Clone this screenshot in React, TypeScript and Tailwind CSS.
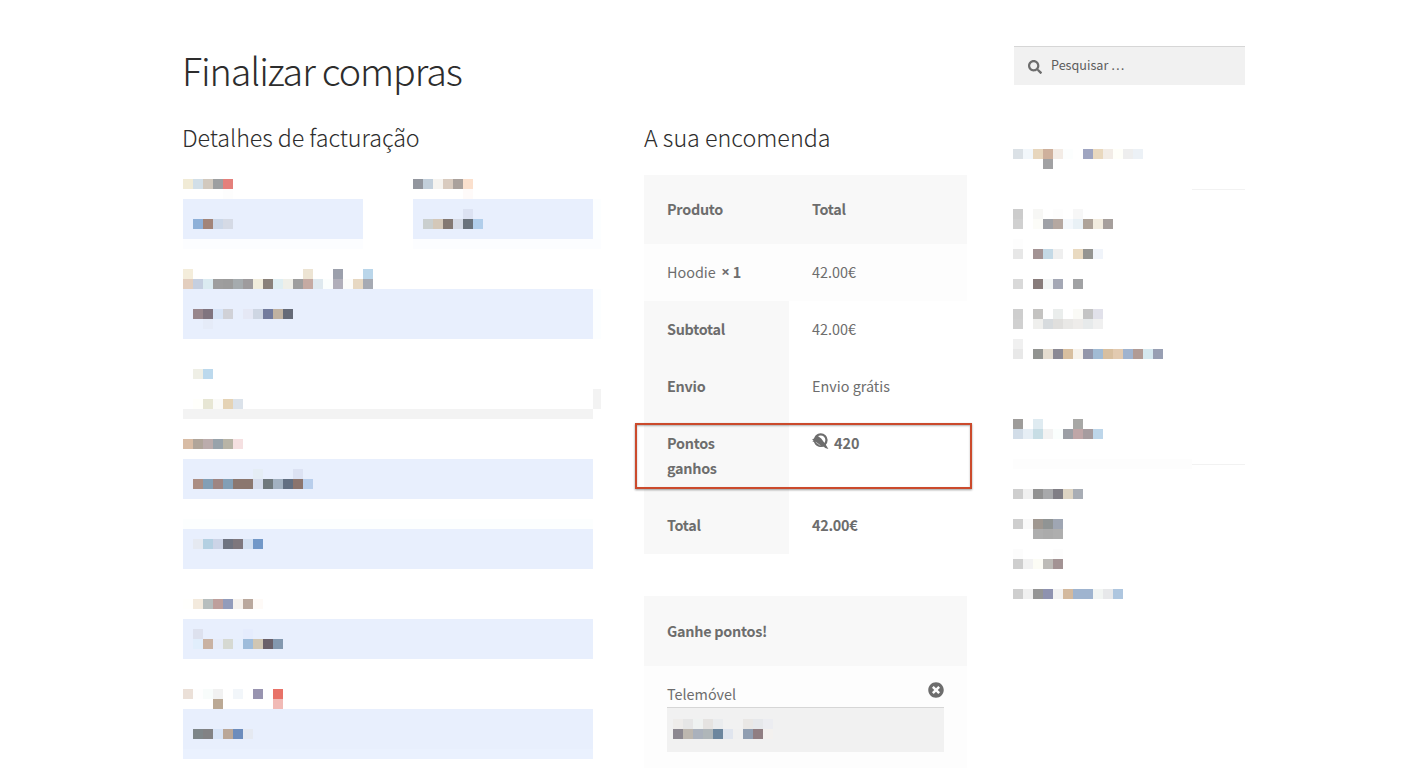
import React from "react";
import { FaSearch, FaTimesCircle } from "react-icons/fa";

/* Each row is a list of 10px cells; "." leaves a cell empty, "*n" repeats it. */
function Mosaic({ rows }: { rows: string[] }) {
  return (
    <div className="flex flex-col" aria-hidden="true">
      {rows.map((row, r) => (
        <div key={r} className="flex h-2.5">
          {row
            .split(" ")
            .filter(Boolean)
            .flatMap((token) => {
              const [cell, count] = token.split("*");
              return Array<string>(Number(count ?? 1)).fill(cell);
            })
            .map((cell, c) => (
              <span
                key={c}
                className="h-2.5 w-2.5 shrink-0"
                style={cell === "." ? undefined : { backgroundColor: `#${cell}` }}
              />
            ))}
        </div>
      ))}
    </div>
  );
}

function Field({ rows, className }: { rows: string[]; className: string }) {
  return (
    <div className={`bg-[#e8effd] pl-2.5 ${className}`}>
      <Mosaic rows={rows} />
    </div>
  );
}

function BillingForm() {
  return (
    <div className="mt-[23px] flex w-[418px] flex-col">
      <div className="flex gap-[50px]">
        <div className="w-[180px]">
          <Mosaic rows={["f1ebd6 d2dfe8 d2c9be 9d9fa1 e4807b", ".*4 fdfdfd"]} />
          <Field className="h-10 pt-5" rows={["8eb0d8 a28478 cbd7e8 d5dae5"]} />
          <div className="h-2.5 bg-[#fcfdff]" />
        </div>
        <div className="w-[188px]">
          <Mosaic rows={["92969e c2cfdb f5f3ef d9cbbf aaa19c fbe0cd", ".*5 fefaf9"]} />
          <div className="flex">
            <Field className="h-10 w-[180px] pt-2.5" rows={[".*4 dce2f2", "cacfcf d4c8b9 837872 d5dae5 6a727b b1ceeb"]} />
            <div className="w-2 bg-[#fcfeff]" />
          </div>
          <div className="h-2.5 bg-[#fcfdff]" />
        </div>
      </div>

      <div className="mt-5">
        <Mosaic
          rows={[
            "f4eddb .*11 ede4d3 .*2 9ca0ac .*2 bad6ea",
            "e3cebe c5cfe0 dbebf1 9e9e9e 9c9c9c a5abae 9e9b9d f1eddc 8a817a dfeef2 efefe8 9e9e9e c5aaa2 dfe9ef fbfefd b1afba fcfcfa e7d8c2 a6aab3",
          ]}
        />
        <div className="flex">
          <Field
            className="h-[50px] w-[410px] pt-5"
            rows={["98868c 80747f d7e4f7 d0d1d7 . e5e8f5 ced6e3 727b9d c0b2a1 656a77", ". e5ebf8"]}
          />
          <div className="w-2 bg-[#fcfeff]" />
        </div>
      </div>

      <div className="mt-[30px] pl-2.5">
        <Mosaic rows={["efefe6 bcd9ed"]} />
      </div>
      <div className="mt-2.5 flex h-[30px] items-end">
        <div className="w-[410px]">
          <div className="pl-2.5">
            <Mosaic rows={["fffffb e7e6d4 fafaf8 e5d3b5 dbe2ea"]} />
          </div>
          <div className="h-2.5 bg-[#f3f3f3]" />
        </div>
        <div className="mb-2.5 h-5 w-2 bg-[#f3f3f3]" />
      </div>

      <div className="mt-5 w-[410px]">
        <Mosaic rows={["d8bca5 b0a59a bbacac 98a3ab b8b4a6 f5e0e1"]} />
        <Field
          className="mt-2.5 h-10 pt-2.5"
          rows={[".*6 e5edf5 .*3 dce2f3", "ab8e84 829fb6 9e8582 829fb6 8b776f*2 d6dded 70797d a2b1c1 626f82 8b746d b8ceec"]}
        />
        <div className="mt-5 h-2.5 bg-[#fcfefe]" />
        <Field className="h-10 pt-2.5" rows={["e5e9f1 b4d0e2 ccd4e7 6e7380 7e777d d3e0f1 7298c8"]} />
      </div>

      <div className="mt-[30px] w-[410px]">
        <Mosaic rows={["fffffd f3eadd b7bebe be9f9c 929cbb f6f2ed baa89d fefaf7"]} />
        <Field
          className="mt-2.5 h-10 pt-2.5"
          rows={["dde1ee .*4 e5ecfd", "e1eefc c9b2a2 e6ecf9 d6d9d2 e6effd 9ebcdb d0c6b3 6a6069 8398af"]}
        />
      </div>

      <div className="mt-[30px] w-[410px]">
        <Mosaic rows={["ebe0d8 fefefe f8fcfb f1f1f1 . f2f6fa . 9894b0 . e87268", ".*3 bba995 .*5 f1bab6"]} />
        <Field className="h-10 pt-5" rows={["7e8689 828284 d7e4f7 baa798 6c8cbc e5e9f1"]} />
        <div className="h-2.5 bg-[#eaf1fe]" />
      </div>
    </div>
  );
}

function OrderRow({ label, children, className }: { label: string; children: React.ReactNode; className: string }) {
  return (
    <div className={`flex ${className}`}>
      <div className="w-[145px] bg-[#f8f8f8] pt-[15px] pl-[23px] font-bold tracking-[-0.27px]">
        <div className="w-[70px]">{label}</div>
      </div>
      <div className="pt-[15px] pl-[23px]">{children}</div>
    </div>
  );
}

function PointsIcon() {
  return (
    <svg viewBox="0 0 17 17" className="mt-[3px] h-[17px] w-[17px]" fill="none">
      <circle cx="8.7" cy="7.1" r="5.8" stroke="#6d6d6d" strokeWidth="2.3" />
      <path d="M5.2 2.4 9.2 5.6 13.6 11.6 11.6 13.4 8 13.8 4 12 2.5 9 .3 8.6 1.7 7.6 0 6.7 2.3 5.3Z" fill="#6d6d6d" />
      <path d="M10.6 12.4 13.2 10.8 16.4 16 13.2 14.9Z" fill="#6d6d6d" />
      <path d="M3.8 9.2 8.4 12.500" stroke="#ffffff" strokeWidth="0.5" />
    </svg>
  );
}

function Order() {
  return (
    <div className="w-[323px]">
      <div className="relative mt-[19px]">
        <div className="flex h-[69px] bg-[#f8f8f8] pt-[21px] pl-[23px] font-bold tracking-[-0.27px]">
          <div className="w-[145px]">Produto</div>
          <div>Total</div>
        </div>
        <div className="flex h-[57px] bg-[#fdfdfd] pt-[15px] pl-[23px]">
          <div className="flex w-[145px]">
            <span>Hoodie</span>
            <strong className="ml-[5.5px] font-['Open_Sans',sans-serif] text-[15px] font-bold">×</strong>
            <strong className="ml-[3px] font-bold">1</strong>
          </div>
          <div>42.00€</div>
        </div>
        <OrderRow className="h-[57px]" label="Subtotal">42.00€</OrderRow>
        <OrderRow className="h-[57px]" label="Envio">Envio grátis</OrderRow>
        <OrderRow className="h-[82px]" label="Pontos ganhos">
          <div className="flex gap-[5px] font-bold">
            <PointsIcon />
            <span>420</span>
          </div>
        </OrderRow>
        <OrderRow className="h-[57px]" label="Total">
          <strong className="font-bold tracking-[-0.27px]">42.00€</strong>
        </OrderRow>
        <div className="absolute top-[248px] -left-[9px] h-[66px] w-[337px] border-2 border-[#cb4a2c] shadow-[0_1px_2px_rgba(0,0,0,0.4),inset_0_1px_2px_rgba(0,0,0,0.3)]" />
      </div>

      <div className="mt-[42px] h-[172px] bg-[#fdfdfd]">
        <div className="h-[70px] bg-[#f8f8f8] pt-[22px] pl-[23px] font-bold tracking-[-0.27px]">Ganhe pontos!</div>
        <div className="flex h-[41px] justify-between pt-[15px] pr-[23px] pl-[23px]">
          <span>Telemóvel</span>
          <FaTimesCircle className="mt-px h-4 w-4" />
        </div>
        <div className="ml-[23px] h-[45px] w-[277px] border-t border-[#d6d6d6] bg-[#f1f1f1] pt-[11px] pl-1.5">
          <Mosaic
            rows={[
              "eeecea e6e6e6 eff2f1 e5e3e1 eaecee . . e9e7e5 e6e8eb ecedf1",
              "8c8890 bdb7af aab1bc afb6b9 6c869e e0e5ee f0f0f0 909eb1 907e82 f3f1ef",
            ]}
          />
        </div>
      </div>
    </div>
  );
}

function Sidebar() {
  return (
    <aside className="flex w-[232px] flex-col pt-[46px]">
      <div className="ml-px flex h-[39px] items-start border-t border-[#d6d6d6] bg-[#f1f1f1] pl-3.5 text-[12.6px] text-[#5c5c5c]">
        <FaSearch className="mt-[13px] h-3.5 w-3.5 text-[#6d6d6d]" />
        <span className="ml-[9px] mt-[5px]">Pesquisar …</span>
      </div>
      <div className="mt-16">
        <Mosaic rows={["dbe1e6 f2f7fb e7d6bd ceb09c f3ece6 fcfefe . 9fa5c1 e9d8be f2ece6 fffff9 eeeeee ecf1f6", ".*3 a1a1a3"]} />
      </div>
      <div className="mt-5 ml-[179px] h-px bg-[#f2f2f2]" />
      <div className="mt-[19px]">
        <Mosaic
          rows={[
            "cccccc . f7f7f5 . fdfdfd . f7f7f7",
            "d0d0d0 . fcfcf8 9fa1a6 b5a8a1 f4f8fc e9f1f6 aea399 f2ecdf a69f9c",
            ".",
            "fdfdfd",
            "e7e7e7 . a39394 c4d9e6 efefef . e9dac1 949491 f0f4fa",
            ".", ".",
            "d9d9d9 . 887c7b f3f6f6 a4a8b5 . a1a2a4",
            ".", ".",
            "cecece . c4c3c1 . eaedec . fafaf6 c4c4c4 e1e1ea",
            "d0d0d0 . efefed d7dbde e0dfdd e9e8e6 eeecea e7eaeb f0f0f0",
            ".",
            "f0f0f0",
            "e8e8e8 . 929491 e5ddd0 8b8994 d8bf9f f6f2eb 9396aa a1bbd4 d8bf9f e2cab0 9fb3cf b19b95 d5e8ef 989fb3",
          ]}
        />
      </div>
      <div className="mt-[60px]">
        <Mosaic rows={["9e9c9a . dfebf1 .*3 a8a8a6", "d2dde8 e6eef5 c7dde5 f2f2f2 fafefd 9b9fa5 bfa6a7 a69c9f bdd6ea"]} />
      </div>
      <div className="mt-5 flex h-2.5">
        <div className="w-[179px] bg-[#fdfdfd]" />
        <div className="mt-[5px] h-px flex-1 bg-[#f2f2f2]" />
      </div>
      <div className="mt-5">
        <Mosaic
          rows={[
            "cecece f0f0f0 929292 a8a9ab 807e85 ddd4c3 a8adb5",
            ".", ".",
            "cecece f9f9f9 9f9790 909494 9fa6b3",
            ".*2 aeaeae ababab aeaeae",
            ".",
            "fcfcfc .*3 fdfdfd",
            "cecece f2f2f2 fcfcf5 bdbbb7 a39394",
            ".", ".",
            "cecece f0f0f0 959595 8e92b0 f2f2f2 d3b99e 9fb4cf*2 f2f5f3 e7e8ea aec6df",
          ]}
        />
      </div>
    </aside>
  );
}

export default function App() {
  return (
    <div className="h-[777px] w-[1427px] overflow-hidden bg-white font-['Noto_Sans_CJK_SC',sans-serif] text-[14.4px] leading-[25px] text-[#6d6d6d]">
      <div className="flex pl-[183px]">
        <main className="w-[830px]">
          <h1 className="mt-[44px] -ml-px h-[52px] text-[37.7px] leading-[52px] font-light tracking-[-1.1px] whitespace-nowrap text-[#2d2d2d]">
            Finalizar compras
          </h1>
          <div className="mt-[23px] flex">
            <section className="w-[461px]">
              <h2 className="-ml-px h-[37px] text-[23.3px] leading-[37px] font-light tracking-[-0.07px] text-[#2d2d2d]">
                Detalhes de facturação
              </h2>
              <BillingForm />
            </section>
            <section>
              <h2 className="h-[37px] text-[23.3px] leading-[37px] font-light text-[#2d2d2d]">A sua encomenda</h2>
              <Order />
            </section>
          </div>
        </main>
        <Sidebar />
      </div>
    </div>
  );
}
